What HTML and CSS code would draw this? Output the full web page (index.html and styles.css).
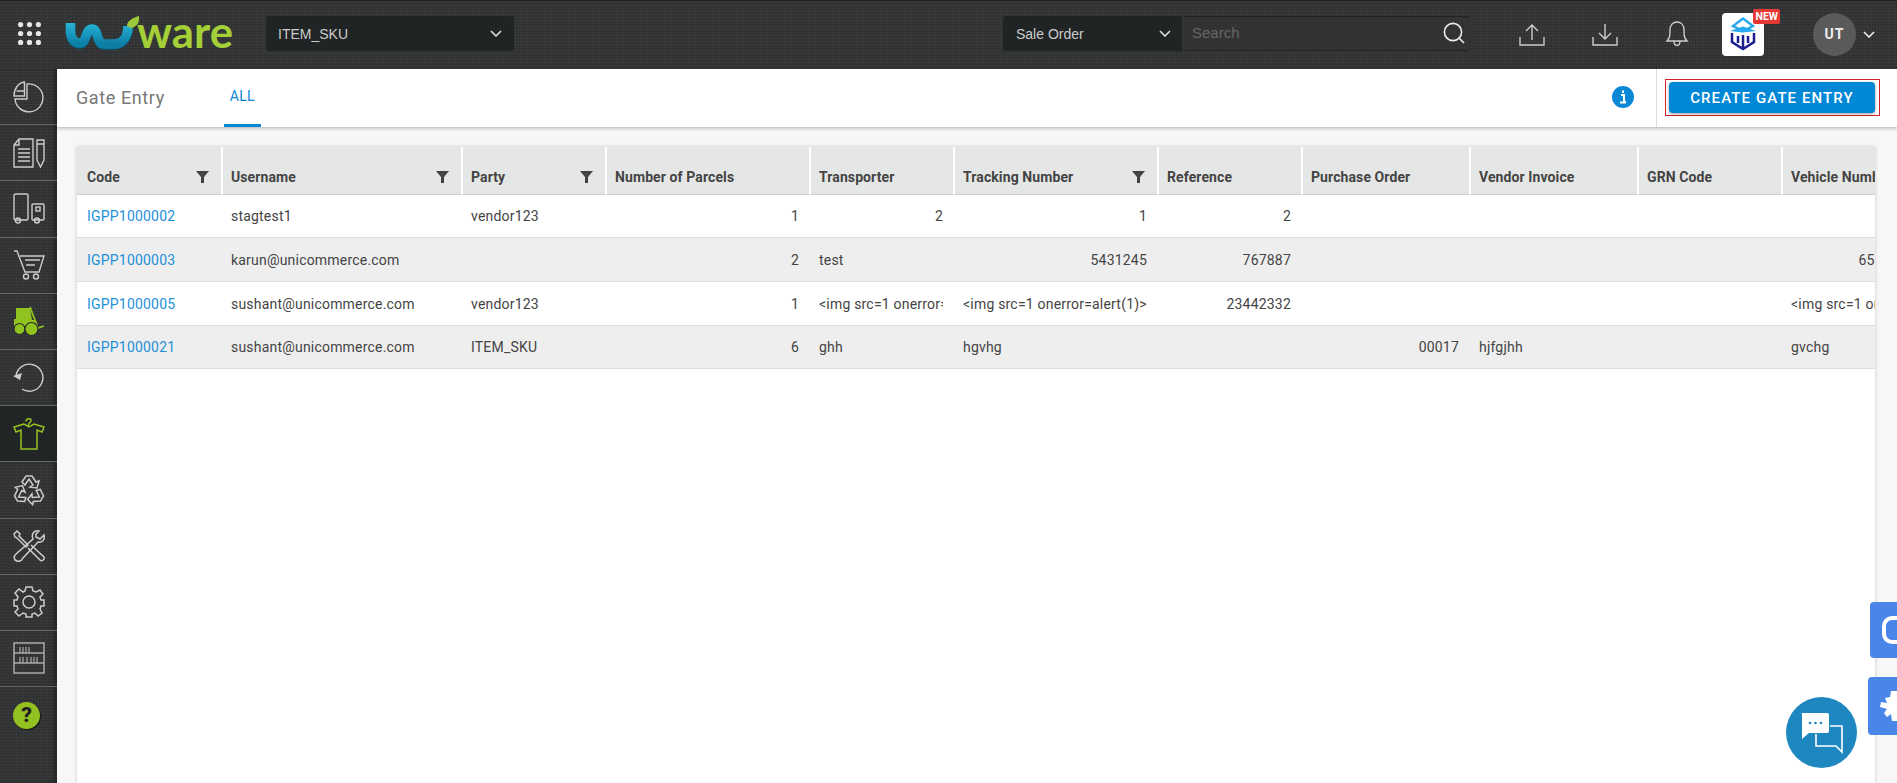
FILE: index.html
```html
<!DOCTYPE html>
<html lang="en">
<head>
    <meta charset="UTF-8">
    <meta name="viewport" content="width=device-width, initial-scale=1.0">
    <title>Gate Entry</title>

    <link rel="stylesheet" href="styles.css">
</head>
<body>
    <header class="topbar">
        <svg class="apps_icon" viewBox="0 0 23 23" width="23" height="23">
            <g fill="#e6e6e6">
                <circle cx="2.6" cy="2.6" r="2.6"/><circle cx="11.5" cy="2.6" r="2.6"/><circle cx="20.4" cy="2.6" r="2.6"/>
                <circle cx="2.6" cy="11.5" r="2.6"/><circle cx="11.5" cy="11.5" r="2.6"/><circle cx="20.4" cy="11.5" r="2.6"/>
                <circle cx="2.6" cy="20.4" r="2.6"/><circle cx="11.5" cy="20.4" r="2.6"/><circle cx="20.4" cy="20.4" r="2.6"/>
            </g>
        </svg>

        <svg class="logo" viewBox="0 0 170 36" width="170" height="36">
            <defs>
                <linearGradient id="swoosh" x1="0" y1="0" x2="0" y2="1">
                    <stop offset="0" stop-color="#27b4d6"/>
                    <stop offset="1" stop-color="#0d7ea6"/>
                </linearGradient>
            </defs>
            <path d="M5.500 7 V15 C5.500 23 10 27 15 27 C22 27 20 13 27 13 C34 13 31 28 39 28 H48 C58 28 63 20 63 10" fill="none" stroke="#0a5a78" stroke-width="9.500" transform="translate(0 1)"/>
            <path d="M5.500 7 V15 C5.500 23 10 27 15 27 C22 27 20 13 27 13 C34 13 31 28 39 28 H48 C58 28 63 20 63 10" fill="none" stroke="url(#swoosh)" stroke-width="9.500"/>
            <path d="M62 10 C62 5 67 2 74 0 C75 6 72 11 66 12 Z" fill="#9cc93a"/>
            <text class="logo_text" x="72" y="31.500" textLength="96" lengthAdjust="spacingAndGlyphs">ware</text>
        </svg>

        <div class="select company_select">
            <span>ITEM_SKU</span>
            <svg class="chevron" viewBox="0 0 12 7" width="12" height="7"><path d="M1 1 L6 6 L11 1" fill="none" stroke="#ddd" stroke-width="1.6"/></svg>
        </div>

        <div class="search_group">
            <div class="select type_select">
                <span>Sale Order</span>
                <svg class="chevron" viewBox="0 0 12 7" width="12" height="7"><path d="M1 1 L6 6 L11 1" fill="none" stroke="#ddd" stroke-width="1.6"/></svg>
            </div>
            <div class="search_box">
                <span>Search</span>
                <svg viewBox="0 0 24 24" width="24" height="24"><circle cx="11" cy="11" r="8.6" fill="none" stroke="#eee" stroke-width="1.6"/><path d="M17 17 L22 22" stroke="#eee" stroke-width="1.6"/></svg>
            </div>
        </div>

        <div class="top_actions">
            <svg class="top_icon" viewBox="0 0 26 23" width="26" height="23"><path d="M1 14 V22 H25 V14 M13 17 V2 M7 8 L13 2 L19 8" fill="none" stroke="#ccc" stroke-width="1.4"/></svg>
            <svg class="top_icon" viewBox="0 0 26 23" width="26" height="23"><path d="M1 14 V22 H25 V14 M13 1 V16 M7 10 L13 16 L19 10" fill="none" stroke="#ccc" stroke-width="1.4"/></svg>
            <svg class="top_icon" viewBox="0 0 24 26" width="24" height="26"><path d="M2 20 C5 17 5 14 5 9 C5 4 8 1 12 1 C16 1 19 4 19 9 C19 14 19 17 22 20 Z M9 20 C9 26 15 26 15 20" fill="none" stroke="#ccc" stroke-width="1.4"/></svg>
            <div class="box_logo">
                <svg viewBox="0 0 30 34" width="30" height="34">
                    <path d="M15 1.500 L25 9 L15 14 L5 9 Z" fill="none" stroke="#25a9ef" stroke-width="2.400"/>
                    <path d="M2 14 L15 9.500 L28 14 L15 15.500 Z" fill="#25a9ef"/>
                    <path d="M4 16 V25 L15 32 L26 25 V16 M10 19 V26 M20 19 V26 M15 18 V32" fill="none" stroke="#1b1f8f" stroke-width="2.500"/>
                </svg>
                <span class="new_badge">NEW</span>
            </div>
            <div class="avatar">UT</div>
            <svg class="chevron" viewBox="0 0 12 7" width="12" height="7"><path d="M1 1 L6 6 L11 1" fill="none" stroke="#eee" stroke-width="1.6"/></svg>
        </div>
    </header>

    <div class="layout">
        <nav class="sidebar">
            <a class="side_item">
                <svg viewBox="0 0 32 32" width="32" height="32"><g fill="none" stroke="#ccc" stroke-width="1.4"><path d="M14 3 A14 14 0 1 1 2 18 H14 Z"/><path d="M11.5 1 V15 H1 A11.5 14 0 0 1 11.5 1 Z M11.5 10 H3.5"/></g></svg>
            </a>
            <a class="side_item">
                <svg viewBox="0 0 32 32" width="32" height="32"><g fill="none" stroke="#ccc" stroke-width="1.4"><path d="M6 2 H20 V30 H1 V8 Z M6 2 V8 H1"/><path d="M5 12 H17 M5 16 H17 M5 20 H17 M5 24 H17" stroke-width="1.6"/><path d="M24 3 H31 V23 L27.5 30 L24 23 Z M24 7 H31"/></g></svg>
            </a>
            <a class="side_item">
                <svg viewBox="0 0 32 32" width="32" height="32"><g fill="none" stroke="#ccc" stroke-width="1.4"><rect x="1" y="1" width="14" height="26" rx="1.5"/><circle cx="5" cy="27.5" r="2.5"/><rect x="19" y="11" width="12" height="16" rx="1"/><rect x="23" y="14" width="4" height="4"/><circle cx="24" cy="27.5" r="2.5"/></g></svg>
            </a>
            <a class="side_item">
                <svg viewBox="0 0 32 32" width="32" height="32"><g fill="none" stroke="#ccc" stroke-width="1.4"><path d="M1 2 H4 L12 23 H26 L31 7 H7"/><path d="M12 11 H27 M13 16 H22" stroke-width="1.6"/><circle cx="13" cy="27.5" r="2.5"/><circle cx="23" cy="27.5" r="2.5"/></g></svg>
            </a>
            <a class="side_item">
                <svg viewBox="0 0 32 32" width="32" height="32"><path d="M3 3 H17 L19 15 H22 V22 H1 V14 H3 Z" fill="#90c31f"/><path d="M17 2 L25 23 L31 21" fill="none" stroke="#90c31f" stroke-width="1.800"/><circle cx="6.500" cy="24" r="5.500" fill="#90c31f" stroke="#2b2b2b" stroke-width="1.200"/><circle cx="18.500" cy="24" r="6.500" fill="#90c31f" stroke="#2b2b2b" stroke-width="1.200"/></svg>
            </a>
            <a class="side_item">
                <svg viewBox="0 0 32 32" width="32" height="32"><g fill="none" stroke="#ccc" stroke-width="1.4"><path d="M3 14 A13.5 13.5 0 1 1 9 27"/></g><path d="M0 14 L9 11 L7 18 Z" fill="#ccc"/></svg>
            </a>
            <a class="side_item active">
                <svg viewBox="0 0 32 32" width="32" height="32"><g fill="none" stroke="#97c11f" stroke-width="1.500"><path d="M11 6 L1 9 L3 14 L8 12 V31 H24 V12 L29 14 L31 9 L21 6 L16 9 Z"/><path d="M13 3.500 C13 0 19 0 18 3 C17 5 15 4.500 15.500 8"/></g></svg>
            </a>
            <a class="side_item">
                <svg viewBox="0 0 32 32" width="32" height="32"><g fill="none" stroke="#ccc" stroke-width="1.500">
                    <path id="recycle_arrow" d="M9 8 L13 2 H19 L23 8 L26 7 L24 14 L17 13 L20 11 L16 5 L12 11 Z"/>
                    <use href="#recycle_arrow" transform="rotate(120 16 17)"/>
                    <use href="#recycle_arrow" transform="rotate(240 16 17)"/>
                </g></svg>
            </a>
            <a class="side_item">
                <svg viewBox="0 0 32 32" width="32" height="32"><g fill="none" stroke="#ccc" stroke-width="1.500"><path d="M1 4 L4 1 L7 4 L6 6 L15 15 L13 17 L4 8 L2 7 Z"/><path d="M18 15 L31 27 C32 29 29 32 27 30 L15 18"/><path d="M26 1 C21 0 18 4 20 9 L3 24 C0 27 1 30 4 31 C7 32 9 30 10 28 L25 12 C30 13 32 9 31 5 L27 9 L23 7 L23 4 Z"/></g></svg>
            </a>
            <a class="side_item">
                <svg viewBox="0 0 32 32" width="32" height="32"><g fill="none" stroke="#ccc" stroke-width="1.5"><circle cx="16" cy="16" r="6"/><path d="M13 1 H19 L20 5 L23 6 L27 4 L30 8 L27 11 L28 14 L31 14 V20 L28 20 L27 23 L29 27 L25 30 L22 27 L19 28 V31 H13 V28 L10 27 L6 30 L2 26 L5 23 L4 20 H1 V14 H4 L5 11 L2 7 L6 3 L10 6 L12 5 Z"/></g></svg>
            </a>
            <a class="side_item">
                <svg viewBox="0 0 32 32" width="32" height="32"><g fill="none" stroke="#aaa" stroke-width="1.5"><rect x="1" y="1" width="30" height="30"/><path d="M1 11 H31 M1 21 H31"/><path d="M7 5 V11 M10 5 V11 M13 5 V11 M16 5 V11 M7 15 V21 M10 15 V21 M14 15 V21 M18 15 V21 M21 15 V21 M24 15 V21" stroke-width="1.2"/></g></svg>
            </a>
            <a class="side_item help_item"><span class="help_icon">?</span></a>
        </nav>

        <main class="content">
            <div class="page_head">
                <h1 class="page_title">Gate Entry</h1>
                <a class="tab">ALL</a>
                <svg class="info_icon" viewBox="0 0 22 22" width="22" height="22"><circle cx="11" cy="11" r="11" fill="#0a88d6"/><path d="M9 9 H12 V16 H14 M8 16.500 H14 M11 4.500 V7" fill="none" stroke="#fff" stroke-width="2"/></svg>
                <div class="head_action">
                    <div class="create_outline">
                        <button class="create_btn">CREATE GATE ENTRY</button>
                    </div>
                </div>
            </div>

            <div class="table_card">
                <table class="entry_table">
                    <colgroup>
                        <col class="w144"><col class="w240"><col class="w144"><col class="w204"><col class="w144"><col class="w204"><col class="w144"><col class="w168"><col class="w168"><col class="w144"><col class="w144">
                    </colgroup>
                    <thead>
                        <tr>
                            <th><div class="th_in">Code<svg class="filter" viewBox="0 0 13 12" width="13" height="12"><path d="M0 0 H13 L8 6 V12 H5 V6 Z"/></svg></div></th>
                            <th><div class="th_in">Username<svg class="filter" viewBox="0 0 13 12" width="13" height="12"><path d="M0 0 H13 L8 6 V12 H5 V6 Z"/></svg></div></th>
                            <th><div class="th_in">Party<svg class="filter" viewBox="0 0 13 12" width="13" height="12"><path d="M0 0 H13 L8 6 V12 H5 V6 Z"/></svg></div></th>
                            <th><div class="th_in">Number of Parcels</div></th>
                            <th><div class="th_in">Transporter</div></th>
                            <th><div class="th_in">Tracking Number<svg class="filter" viewBox="0 0 13 12" width="13" height="12"><path d="M0 0 H13 L8 6 V12 H5 V6 Z"/></svg></div></th>
                            <th><div class="th_in">Reference</div></th>
                            <th><div class="th_in">Purchase Order</div></th>
                            <th><div class="th_in">Vendor Invoice</div></th>
                            <th><div class="th_in">GRN Code</div></th>
                            <th><div class="th_in">Vehicle Number</div></th>
                        </tr>
                    </thead>
                    <tbody>
                        <tr>
                            <td><a class="code_link">IGPP1000002</a></td><td>stagtest1</td><td>vendor123</td><td class="num">1</td><td class="num">2</td><td class="num">1</td><td class="num">2</td><td></td><td></td><td></td><td></td>
                        </tr>
                        <tr>
                            <td><a class="code_link">IGPP1000003</a></td><td>karun@unicommerce.com</td><td></td><td class="num">2</td><td>test</td><td class="num">5431245</td><td class="num">767887</td><td></td><td></td><td></td><td class="num">6543210</td>
                        </tr>
                        <tr>
                            <td><a class="code_link">IGPP1000005</a></td><td>sushant@unicommerce.com</td><td>vendor123</td><td class="num">1</td><td><div class="clip">&lt;img src=1 onerror=alert(1)&gt;</div></td><td><div class="clip">&lt;img src=1 onerror=alert(1)&gt;</div></td><td class="num">23442332</td><td></td><td></td><td></td><td><div class="clip">&lt;img src=1 onerror=alert(1)&gt;</div></td>
                        </tr>
                        <tr>
                            <td><a class="code_link">IGPP1000021</a></td><td>sushant@unicommerce.com</td><td>ITEM_SKU</td><td class="num">6</td><td>ghh</td><td>hgvhg</td><td></td><td class="num">00017</td><td>hjfgjhh</td><td></td><td>gvchg</td>
                        </tr>
                    </tbody>
                </table>
            </div>
        </main>
    </div>

    <div class="side_tab tab_one">
        <svg viewBox="0 0 15 28" width="15" height="28"><rect x="2" y="2" width="24" height="24" rx="8" fill="none" stroke="#fff" stroke-width="4"/></svg>
    </div>
    <div class="side_tab tab_two">
        <svg viewBox="0 0 17 30" width="17" height="30"><path d="M11 0 H17 V30 H12 L11 23 L7 26 L4 22 L7 18 L0 16 L1 11 L7 12 L5 7 L10 6 Z" fill="#fff"/></svg>
    </div>
    <div class="chat_btn">
        <svg viewBox="0 0 42 42" width="42" height="42">
            <path d="M2 1 H26 Q28 1 28 3 V19 Q28 21 26 21 H8 L1 27 V3 Q0 1 2 1 Z" fill="#fff"/>
            <circle cx="9" cy="11" r="1.300" fill="#1f87c0"/><circle cx="14.500" cy="11" r="1.300" fill="#1f87c0"/><circle cx="20" cy="11" r="1.300" fill="#1f87c0"/>
            <path d="M29 14 H41 V40 L35 34 H15 V22" fill="none" stroke="#fff" stroke-width="1.600"/>
        </svg>
    </div>
</body>
</html>
```

FILE: styles.css
```css
* {
    margin: 0;
    padding: 0;
    box-sizing: border-box;
}

html, body {
    height: 100%;
}

body {
    display: flex;
    flex-direction: column;
    overflow: hidden;
    background: #f7f7f7;
    font-family: Roboto, "Liberation Sans", sans-serif;
    font-size: 14px;
    color: #444;
}

.topbar {
    display: flex;
    align-items: center;
    flex: none;
    height: 69px;
    padding: 0 22px 3px 18px;
    background-color: #333435;
    background-image:
        repeating-linear-gradient(0deg, rgba(255,255,255,.035) 0 1px, transparent 1px 3px),
        repeating-linear-gradient(90deg, rgba(0,0,0,.1) 0 1px, transparent 1px 3px);
    border-top: 1px solid #222;
    font-family: "Liberation Sans", Arial, sans-serif;
}

.logo {
    margin-left: 24px;
    overflow: visible;
}

.logo_text {
    font-family: Lato, sans-serif;
    font-weight: 700;
    font-size: 44px;
    fill: #a4cf37;
}

.select {
    display: flex;
    align-items: center;
    justify-content: space-between;
    height: 35px;
    background: #212425;
    border-radius: 3px;
    color: #ccc;
    font-size: 14px;
}

.company_select {
    width: 248px;
    margin-left: 31px;
    padding: 0 12px 0 12px;
}

.search_group {
    display: flex;
    margin-left: auto;
    margin-right: 49px;
}

.type_select {
    width: 179px;
    padding: 0 11px 0 13px;
    border-radius: 3px 0 0 3px;
}

.search_box {
    display: flex;
    align-items: center;
    justify-content: space-between;
    width: 286px;
    height: 35px;
    margin-left: 2px;
    padding: 0 4px 2px 8px;
    background: #333;
    border-radius: 0 3px 3px 0;
    box-shadow: inset 0 -1px 0 #222, inset 0 1px 0 #222;
    color: #666;
    font-size: 15px;
}

.top_actions {
    display: flex;
    align-items: center;
    margin-top: 1px;
}

.top_icon:nth-child(2) {
    margin-left: 47px;
}

.top_icon:nth-child(3) {
    margin-left: 47px;
    margin-right: 33px;
}

.box_logo {
    position: relative;
    display: flex;
    align-items: center;
    justify-content: center;
    width: 42px;
    height: 43px;
    background: #fff;
    border-radius: 4px;
}

.new_badge {
    position: absolute;
    top: -4px;
    right: -16px;
    padding: 0 2px;
    height: 15px;
    line-height: 15px;
    background: #e53935;
    border-radius: 2px;
    color: #fff;
    font-size: 10.500px;
    font-weight: 700;
    font-family: Roboto, sans-serif;
}

.avatar {
    display: flex;
    align-items: center;
    justify-content: center;
    width: 43px;
    height: 43px;
    margin-left: 49px;
    margin-right: 7px;
    background: #5a5a5a;
    border-radius: 50%;
    color: #eee;
    font-family: Roboto, sans-serif;
    font-size: 14px;
    font-weight: 700;
    letter-spacing: 1px;
}

.layout {
    display: flex;
    flex: 1;
    min-height: 0;
}

.sidebar {
    flex: none;
    width: 57px;
    background-color: #333435;
    background-image:
        repeating-linear-gradient(0deg, rgba(255,255,255,.03) 0 1px, transparent 1px 3px),
        repeating-linear-gradient(90deg, rgba(0,0,0,.1) 0 1px, transparent 1px 3px);
    box-shadow: inset -3px 0 3px rgba(0,0,0,.25);
}

.side_item {
    display: flex;
    align-items: center;
    height: 56.200px;
    padding-left: 13px;
    border-bottom: 1px solid #666;
}

.side_item.active {
    background: #222526;
}

.help_item {
    border-bottom: 0;
}

.help_icon {
    display: flex;
    align-items: center;
    justify-content: center;
    width: 27px;
    height: 27px;
    background: #94c122;
    border-radius: 50%;
    box-shadow: 1px 1px 1px rgba(0,0,0,.6);
    color: #222;
    font-size: 21px;
    font-weight: 900;
}

.content {
    flex: 1;
    min-width: 0;
    display: flex;
    flex-direction: column;
}

.page_head {
    display: flex;
    align-items: center;
    flex: none;
    height: 58px;
    padding-left: 19px;
    background: #fff;
    box-shadow: 0 1px 4px rgba(0,0,0,.3);
}

.page_title {
    margin-bottom: 2px;
    font-size: 18px;
    font-weight: 400;
    letter-spacing: .6px;
    color: #777;
}

.tab {
    display: flex;
    align-items: center;
    align-self: stretch;
    margin-left: 59px;
    padding: 0 6px 2px;
    color: #0a88d6;
    font-size: 14px;
    letter-spacing: .3px;
    border-bottom: 3px solid #0a88d6;
}

.info_icon {
    margin-left: auto;
    margin-right: 22px;
    margin-bottom: 2px;
}

.head_action {
    display: flex;
    align-items: center;
    align-self: stretch;
    padding: 0 17px 0 8px;
    border-left: 1px solid #ddd;
}

.create_outline {
    padding: 2px 4px 2px 3px;
    border: 1px solid #d3222e;
    margin-bottom: 1px;
}

.create_btn {
    display: block;
    width: 206px;
    height: 31px;
    background: #0088d6;
    border: 0;
    border-radius: 4px;
    box-shadow: 0 1px 3px rgba(0,0,0,.4);
    color: #fff;
    font-family: Roboto, sans-serif;
    font-size: 15px;
    font-weight: 500;
    letter-spacing: 1.100px;
}

.table_card {
    flex: 1;
    min-height: 0;
    margin: 20px 22px 0 20px;
    overflow: hidden;
    background: #fff;
    box-shadow: 0 0 4px rgba(0,0,0,.2);
}

.entry_table {
    table-layout: fixed;
    width: 1848px;
    border-collapse: separate;
    border-spacing: 0;
}

.w144 { width: 144px; }
.w168 { width: 168px; }
.w204 { width: 204px; }
.w240 { width: 240px; }

.entry_table th {
    height: 48px;
    padding: 0 12px 0 8px;
    background: #e5e7e6;
    border-left: 2px solid #fff;
    border-bottom: 1px solid #ccc;
    vertical-align: bottom;
    text-align: left;
    font-size: 14px;
    font-weight: 700;
    letter-spacing: .1px;
    color: #444;
}

.entry_table th:first-child {
    padding-left: 10px;
    border-left: 0;
}

.th_in {
    display: flex;
    align-items: center;
    justify-content: space-between;
    padding-bottom: 9px;
    white-space: nowrap;
    line-height: 16px;
}

.filter {
    fill: #444;
}

.entry_table td {
    height: 44px;
    padding: 0 10px;
    border-bottom: 1px solid #ddd;
    font-size: 14px;
    letter-spacing: .2px;
    color: #444;
    white-space: nowrap;
    overflow: hidden;
}

.entry_table tbody tr:first-child td,
.entry_table tbody tr:last-child td {
    height: 43px;
}

.entry_table tbody tr:nth-child(even) td {
    background: #eee;
}

.entry_table td.num {
    text-align: right;
}

.clip {
    overflow: hidden;
}

.code_link {
    color: #1e90d8;
}

.side_tab {
    position: fixed;
    right: 0;
    display: flex;
    align-items: center;
    justify-content: flex-end;
    background: #4a86e8;
    border-radius: 4px 0 0 4px;
}

.tab_one {
    top: 602px;
    width: 27px;
    height: 56px;
}

.tab_two {
    top: 677px;
    width: 29px;
    height: 58px;
}

.chat_btn {
    position: fixed;
    left: 1786px;
    top: 697px;
    display: flex;
    align-items: center;
    justify-content: center;
    width: 71px;
    height: 71px;
    background: #1f87c0;
    border-radius: 50%;
}
```
